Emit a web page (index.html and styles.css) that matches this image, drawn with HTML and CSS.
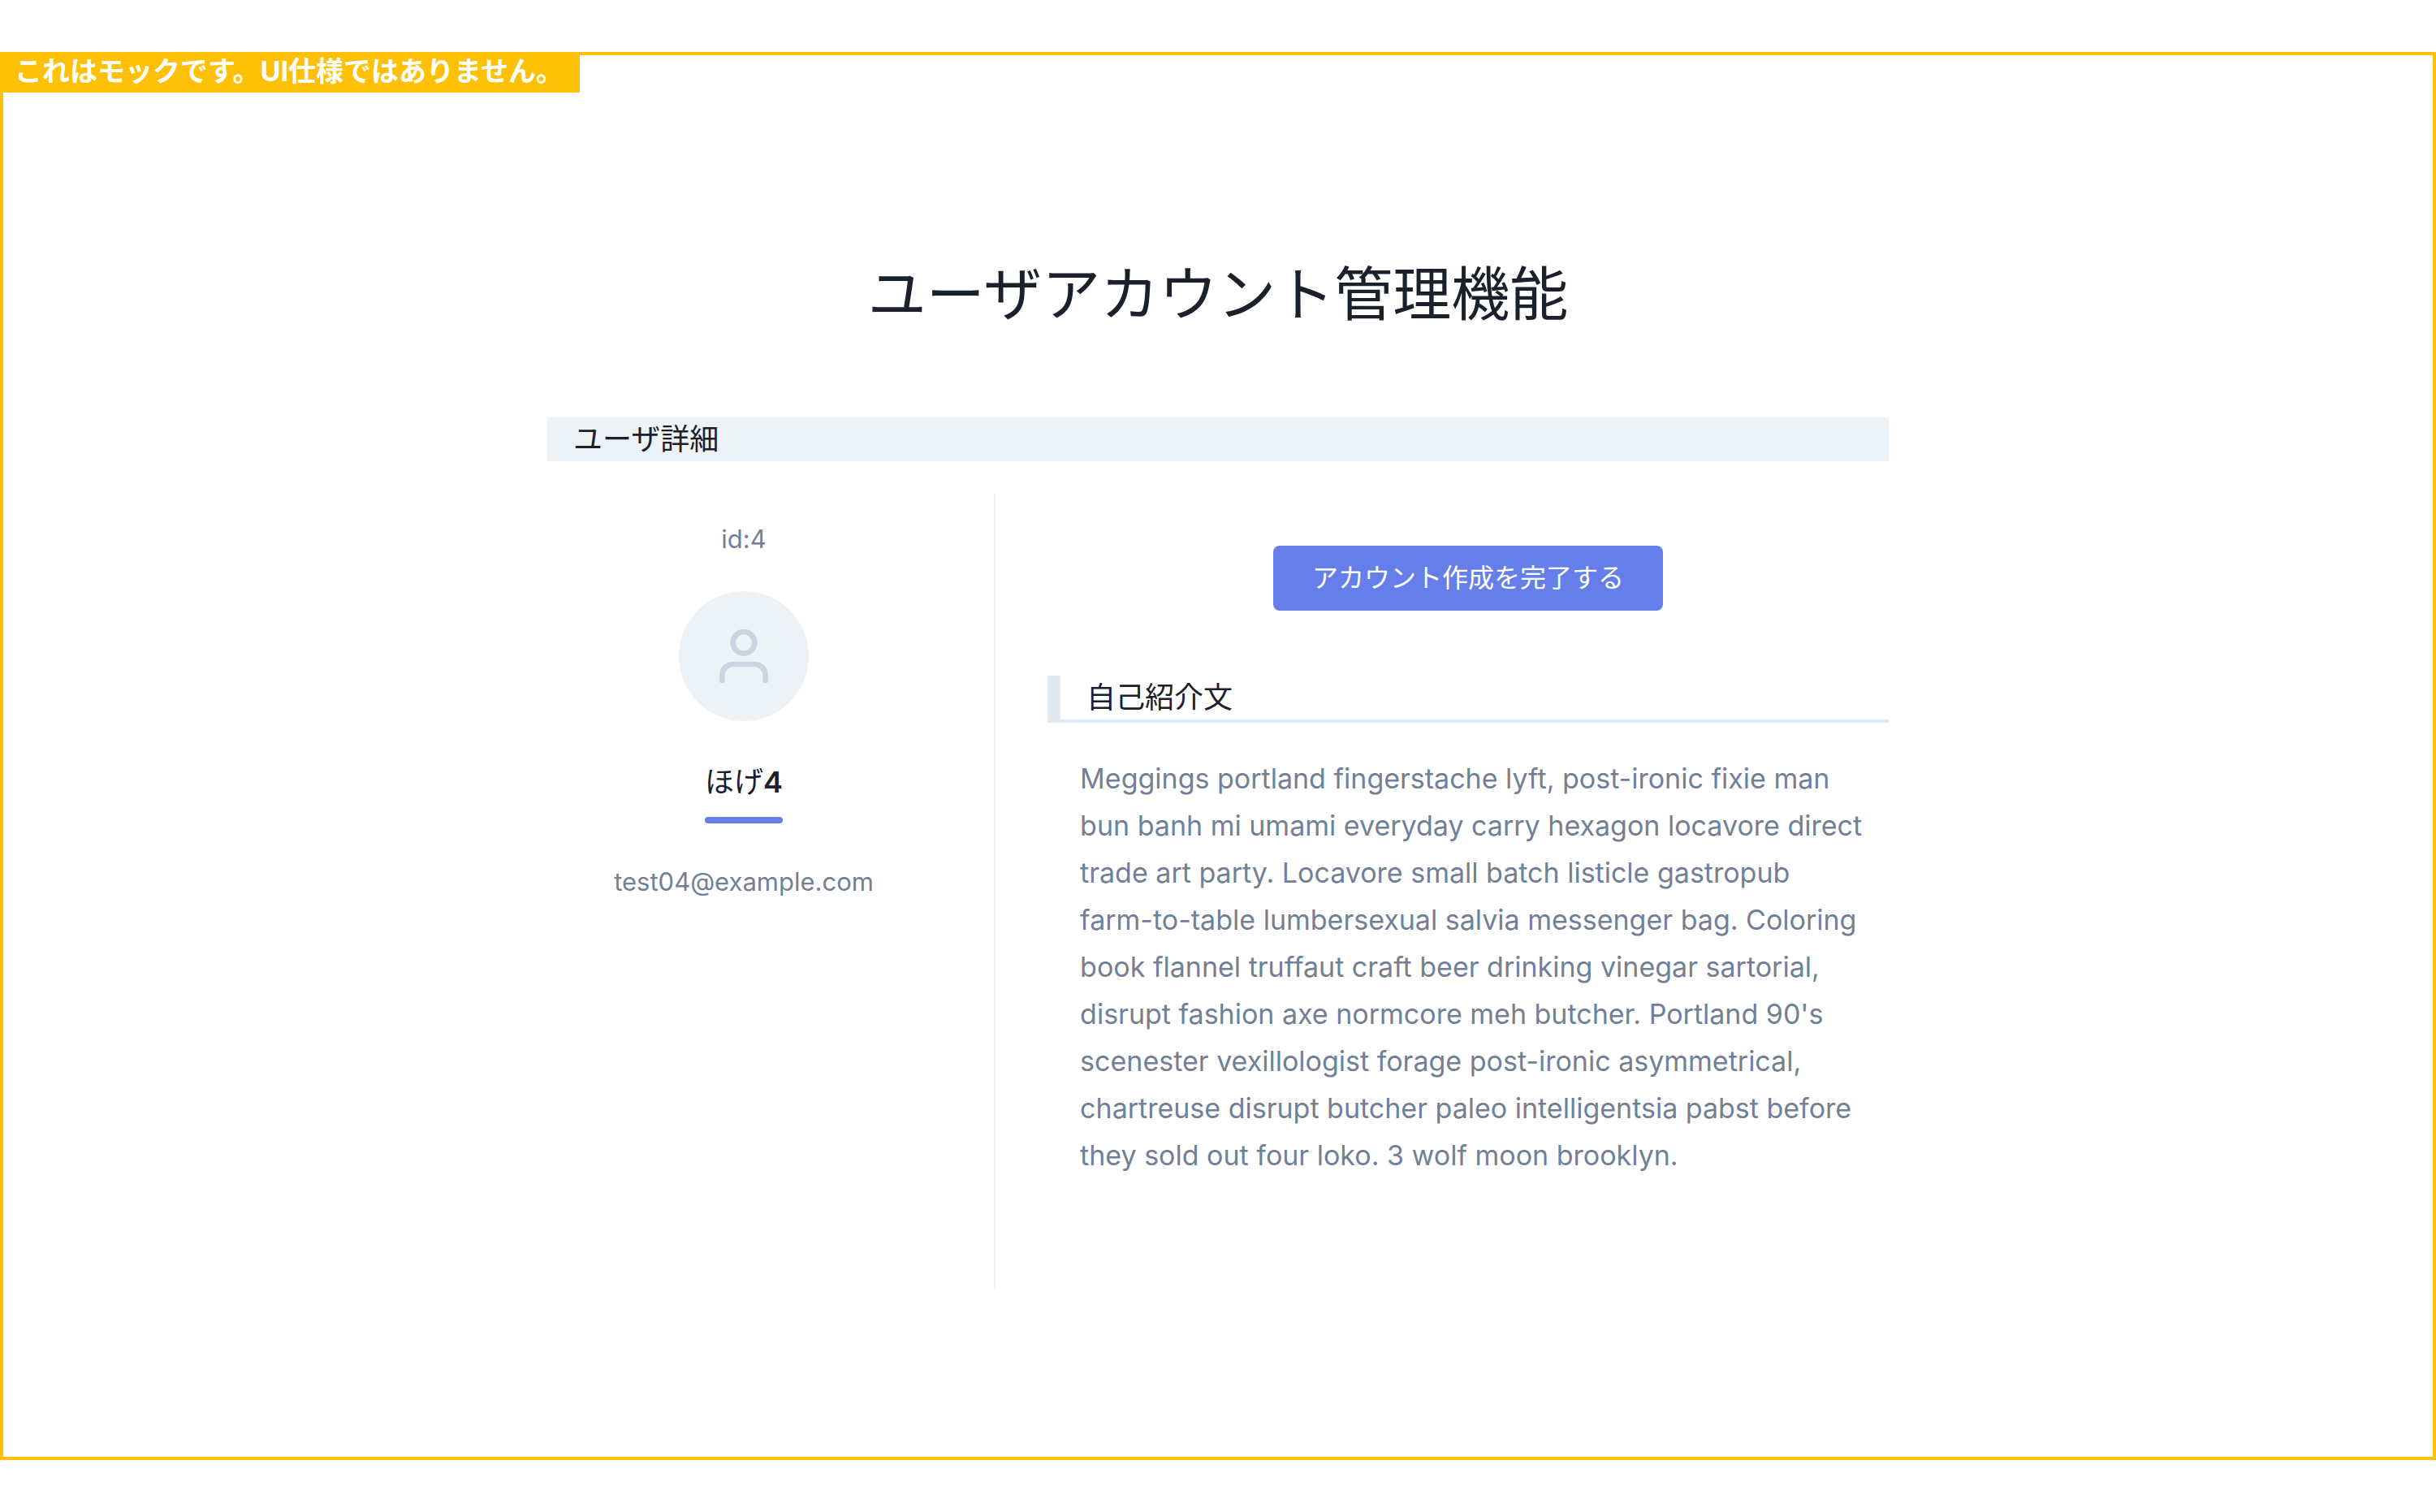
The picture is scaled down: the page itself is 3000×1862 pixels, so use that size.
FILE: index.html
```html
<!DOCTYPE html>
<html lang="ja">
<head>
  <meta charset="utf-8">
  <meta name="viewport" content="width=device-width, initial-scale=1">
  <title>ユーザアカウント管理機能</title>
  <link rel="stylesheet" href="styles.css">
</head>
<body>
  <div class="mock-frame">
    <p class="mock-label">これはモックです。UI仕様ではありません。</p>
    <main class="content">
      <h1 class="page-title">ユーザアカウント管理機能</h1>
      <h2 class="section-title">ユーザ詳細</h2>
      <div class="detail">
        <section class="profile">
          <p class="profile-text">id:4</p>
          <div class="avatar">
            <svg class="avatar-icon" viewBox="0 0 24 24" fill="none" stroke="currentColor" stroke-width="2" stroke-linecap="round" stroke-linejoin="round" aria-hidden="true">
              <path d="M20 21v-2a4 4 0 0 0-4-4H8a4 4 0 0 0-4 4v2"/>
              <circle cx="12" cy="7" r="4"/>
            </svg>
          </div>
          <h3 class="profile-name">ほげ<span class="profile-number">4</span></h3>
          <div class="accent"></div>
          <p class="profile-text">test04@example.com</p>
        </section>
        <section class="about">
          <button class="complete-button" type="button">アカウント作成を完了する</button>
          <h3 class="about-title">自己紹介文</h3>
          <p class="about-text">Meggings portland fingerstache lyft, post-ironic fixie man<br>
            bun banh mi umami everyday carry hexagon locavore direct<br>
            trade art party. Locavore small batch listicle gastropub<br>
            farm-to-table lumbersexual salvia messenger bag. Coloring<br>
            book flannel truffaut craft beer drinking vinegar sartorial,<br>
            disrupt fashion axe normcore meh butcher. Portland 90's<br>
            scenester vexillologist forage post-ironic asymmetrical,<br>
            chartreuse disrupt butcher paleo intelligentsia pabst before<br>
            they sold out four loko. 3 wolf moon brooklyn.</p>
        </section>
      </div>
    </main>
  </div>
</body>
</html>
```
FILE: styles.css
```css
* {
  box-sizing: border-box;
}

body {
  margin: 0;
  background: #fff;
  color: #1a202c;
  font-family: Inter, "Noto Sans CJK JP", sans-serif;
  font-size: 32px;
  line-height: 48px;
}

h1, h2, h3, p {
  margin: 0;
  font-weight: 400;
}

.mock-frame {
  margin: 64px 0;
  border: 4px solid #ffc107;
}

.mock-label {
  width: fit-content;
  padding: 0 20px 6px 14px;
  background: #ffc107;
  color: #fff;
  font-size: 34px;
  font-weight: 700;
  line-height: 40px;
}

.content {
  max-width: 1652px;
  margin: 0 auto;
  padding: 208px 0 206px;
}

.page-title {
  font-size: 72px;
  line-height: 80px;
  text-align: center;
}

.section-title {
  margin-top: 112px;
  padding-left: 32px;
  background: #edf2f7;
  font-size: 36px;
  line-height: 54px;
}

.detail {
  display: grid;
  grid-template-columns: 33.3% 1fr;
  margin-top: 40px;
  min-height: 980px;
}

.profile {
  display: flex;
  flex-direction: column;
  align-items: center;
  padding: 32px 66px 32px 0;
}

.profile-text {
  color: #718096;
  font-size: 31px;
}

.avatar {
  display: flex;
  align-items: center;
  justify-content: center;
  width: 160px;
  height: 160px;
  margin: 40px 0 48px;
  border-radius: 50%;
  background: #edf2f7;
  color: #cbd5e0;
}

.avatar-icon {
  width: 80px;
  height: 80px;
}

.profile-name {
  font-size: 36px;
  line-height: 54px;
}

.profile-number {
  font-weight: 600;
}

.accent {
  width: 96px;
  height: 8px;
  margin: 16px 0 48px;
  border-radius: 4px;
  background: #667eea;
}

.about {
  padding: 64px 0 32px 64px;
  border-left: 2px solid #edf2f7;
}

.complete-button {
  display: block;
  margin: 0 auto;
  padding: 16px 48px;
  border: 0;
  border-radius: 8px;
  background: #667eea;
  color: #fff;
  font: inherit;
  cursor: pointer;
}

.about-title {
  margin-top: 80px;
  padding-left: 32px;
  border-left: 16px solid #e2e8f0;
  border-bottom: 4px solid #e2e8f0;
  font-size: 36px;
  line-height: 54px;
}

.about-text {
  margin-top: 40px;
  padding: 0 16px 0 40px;
  color: #718096;
  font-size: 34px;
  line-height: 58px;
}
```
